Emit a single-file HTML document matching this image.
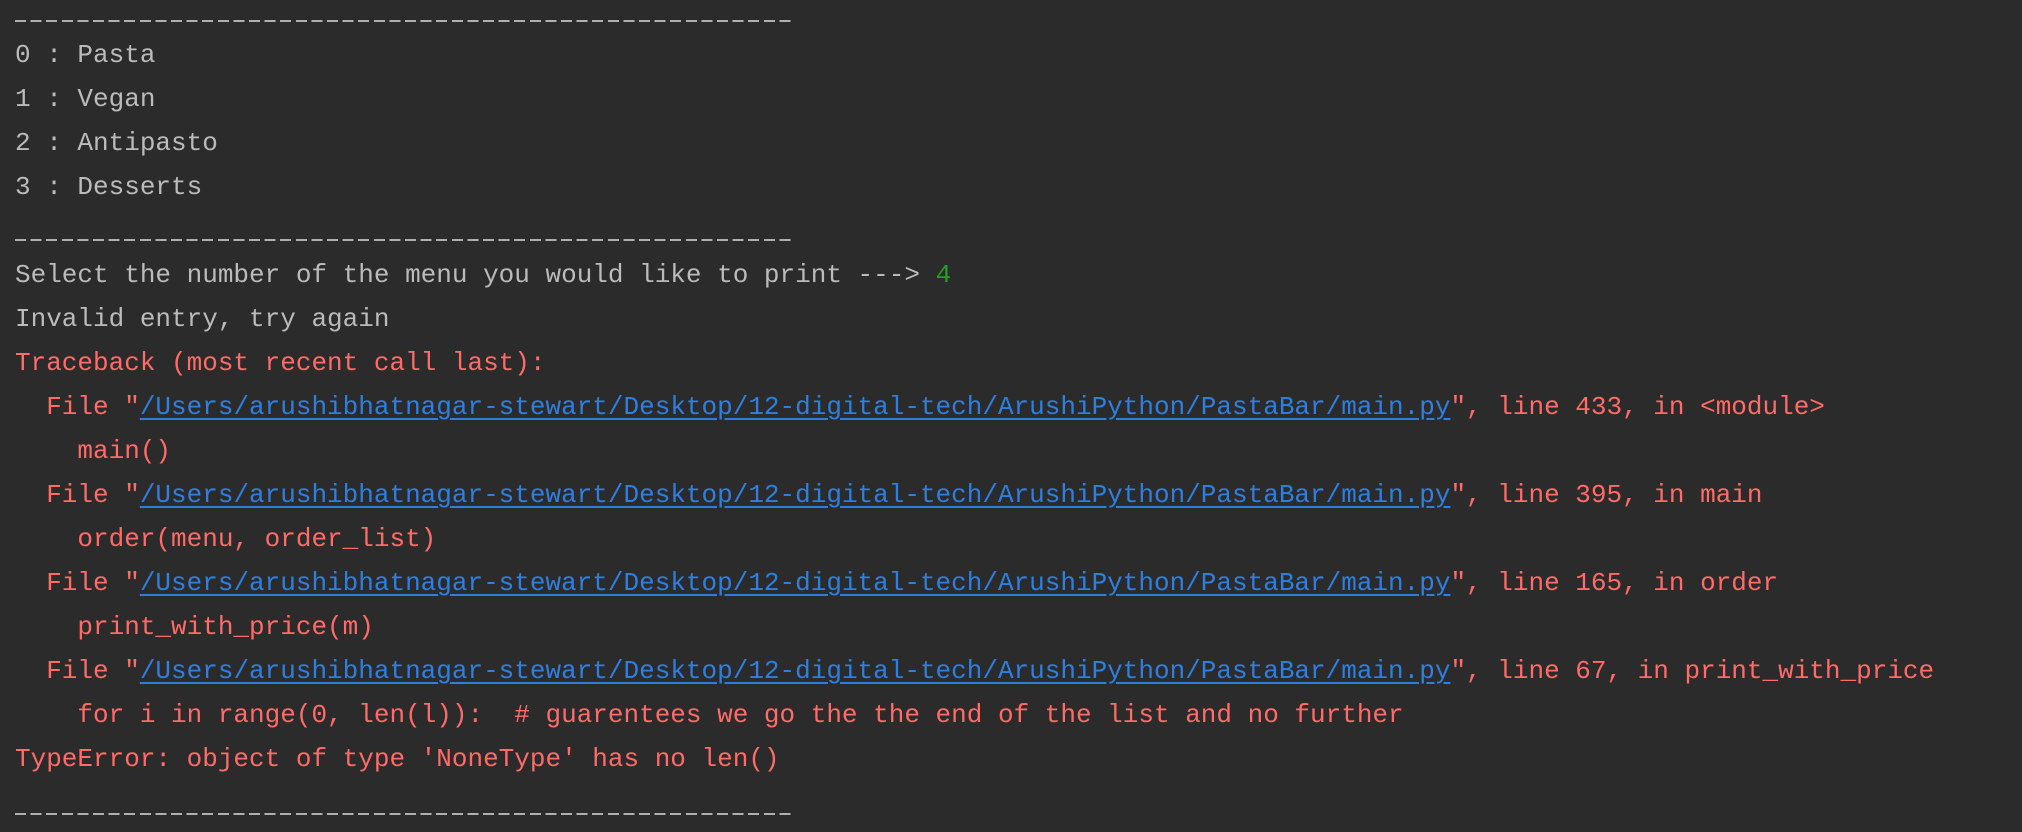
<!DOCTYPE html>
<html><head><meta charset="utf-8"><style>
html,body{margin:0;padding:0;background:#2b2b2b;width:2022px;height:832px;overflow:hidden}
.l{position:absolute;left:15px;height:44px;line-height:44px;font-family:"Liberation Mono",monospace;font-size:26px;color:#bbbbbb;white-space:pre}
.r{color:#ff6b68}
.u{color:#2f7fe0;text-decoration:underline;text-underline-offset:4px}
.g{color:#2a9a2a}
.d{position:absolute;left:15px;width:780px;height:2px;background:repeating-linear-gradient(90deg,#b0b0b0 0 11px,transparent 11px 15.6px)}
</style></head><body>
<div class="d" style="top:20px"></div>
<div class="l" style="top:33px">0 : Pasta</div>
<div class="l" style="top:77px">1 : Vegan</div>
<div class="l" style="top:121px">2 : Antipasto</div>
<div class="l" style="top:165px">3 : Desserts</div>
<div class="d" style="top:239px"></div>
<div class="l" style="top:253px">Select the number of the menu you would like to print ---> <span class="g">4</span></div>
<div class="l" style="top:297px">Invalid entry, try again</div>
<div class="l r" style="top:341px">Traceback (most recent call last):</div>
<div class="l r" style="top:385px">  File "<span class="u">/Users/arushibhatnagar-stewart/Desktop/12-digital-tech/ArushiPython/PastaBar/main.py</span>", line 433, in &lt;module&gt;</div>
<div class="l r" style="top:429px">    main()</div>
<div class="l r" style="top:473px">  File "<span class="u">/Users/arushibhatnagar-stewart/Desktop/12-digital-tech/ArushiPython/PastaBar/main.py</span>", line 395, in main</div>
<div class="l r" style="top:517px">    order(menu, order_list)</div>
<div class="l r" style="top:561px">  File "<span class="u">/Users/arushibhatnagar-stewart/Desktop/12-digital-tech/ArushiPython/PastaBar/main.py</span>", line 165, in order</div>
<div class="l r" style="top:605px">    print_with_price(m)</div>
<div class="l r" style="top:649px">  File "<span class="u">/Users/arushibhatnagar-stewart/Desktop/12-digital-tech/ArushiPython/PastaBar/main.py</span>", line 67, in print_with_price</div>
<div class="l r" style="top:693px">    for i in range(0, len(l)):  # guarentees we go the the end of the list and no further</div>
<div class="l r" style="top:737px">TypeError: object of type 'NoneType' has no len()</div>
<div class="d" style="top:813px"></div>
</body></html>
